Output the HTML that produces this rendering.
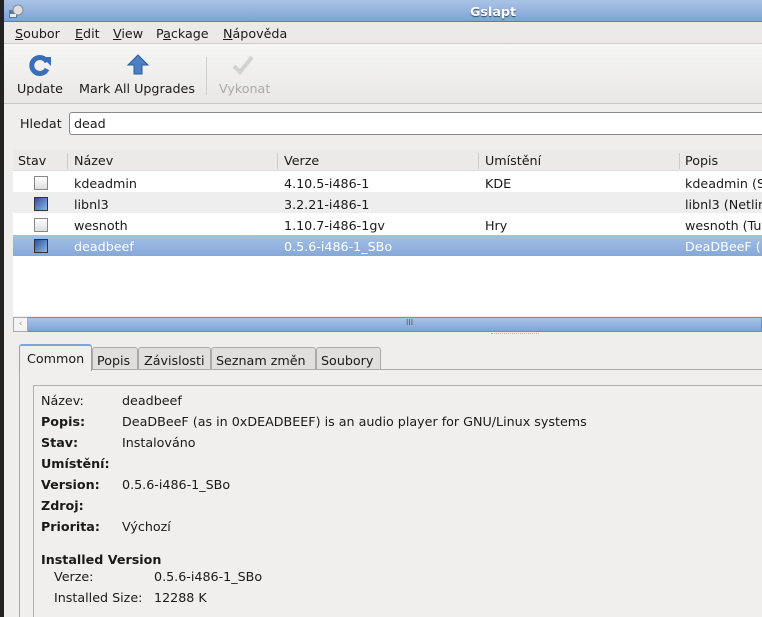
<!DOCTYPE html>
<html><head><meta charset="utf-8"><style>
*{margin:0;padding:0;box-sizing:border-box}
html,body{width:762px;height:617px;overflow:hidden}
body{background:#efeeed;font-family:"DejaVu Sans",sans-serif;font-size:12.7px;line-height:19px;color:#1a1a1a;position:relative}
.a{position:absolute;white-space:nowrap}
u{text-decoration:underline}
</style></head><body>
<div class="a" style="left:0;top:0;width:4px;height:617px;background:#222"></div>
<div class="a" style="left:4px;top:0;width:758px;height:22px;background:linear-gradient(#a9c3e6,#7ea3d6);border-bottom:1px solid #5a7fb5"></div>
<div class="a" style="left:8px;top:3px;width:16px;height:16px;"><svg width="16" height="16"><rect x="1" y="7" width="8" height="8" fill="#5577aa"/><circle cx="10" cy="7" r="5" fill="#ddd" stroke="#888"/><rect x="2" y="11" width="6" height="3" fill="#eee"/></svg></div>
<div class="a" style="left:470px;top:2px;color:#fff;font-weight:bold;text-shadow:0 1px 1px #345">Gslapt</div>
<div class="a" style="left:4px;top:22px;width:758px;height:22px;background:#ebeae9;border-bottom:1px solid #ccc"></div>
<div class="a" style="left:15px;top:24px"><u>S</u>oubor</div>
<div class="a" style="left:75px;top:24px"><u>E</u>dit</div>
<div class="a" style="left:113px;top:24px"><u>V</u>iew</div>
<div class="a" style="left:156px;top:24px">P<u>a</u>ckage</div>
<div class="a" style="left:223px;top:24px"><u>N</u>ápověda</div>
<div class="a" style="left:4px;top:44px;width:758px;height:60px;background:linear-gradient(#f6f6f5,#e8e7e6);border-bottom:1px solid #c8c8c8"></div>
<svg class="a" style="left:28px;top:53px" width="24" height="24"><path d="M19 9A8 8 0 1 0 19 16" fill="none" stroke="#3a6fb8" stroke-width="5"/><path d="M14 4L23 4L23 13Z" fill="#3a6fb8"/></svg>
<svg class="a" style="left:126px;top:53px" width="24" height="24"><path d="M12 2L22 12L16 12L16 21L8 21L8 12L2 12Z" fill="#4a80c4" stroke="#2d5c9a"/></svg>
<svg class="a" style="left:231px;top:54px" width="24" height="22"><path d="M3 12L9 18L21 3" fill="none" stroke="#d2d2d2" stroke-width="4"/></svg>
<div class="a" style="left:17px;top:79px">Update</div>
<div class="a" style="left:79px;top:79px">Mark All Upgrades</div>
<div class="a" style="left:206px;top:57px;width:1px;height:38px;background:#cfcfcf"></div>
<div class="a" style="left:219px;top:79px;color:#aaa">Vykonat</div>
<div class="a" style="left:20px;top:114px">Hledat</div>
<div class="a" style="left:69px;top:112px;width:700px;height:23px;background:#fff;border:1px solid #888;border-radius:3px"></div>
<div class="a" style="left:74px;top:114px">dead</div>
<div class="a" style="left:13px;top:149px;width:749px;height:167px;background:#fff"></div>
<div class="a" style="left:13px;top:149px;width:749px;height:22px;background:#eceae9;border-bottom:1px solid #ddd"></div>
<div class="a" style="left:18px;top:151px">Stav</div>
<div class="a" style="left:67px;top:153px;width:1px;height:16px;background:#ccc"></div>
<div class="a" style="left:74px;top:151px">Název</div>
<div class="a" style="left:277px;top:153px;width:1px;height:16px;background:#ccc"></div>
<div class="a" style="left:284px;top:151px">Verze</div>
<div class="a" style="left:478px;top:153px;width:1px;height:16px;background:#ccc"></div>
<div class="a" style="left:485px;top:151px">Umístění</div>
<div class="a" style="left:679px;top:153px;width:1px;height:16px;background:#ccc"></div>
<div class="a" style="left:685px;top:151px">Popis</div>
<div class="a" style="left:13px;top:192px;width:749px;height:21px;background:#eeeeee"></div>
<div class="a" style="left:13px;top:235px;width:749px;height:21px;background:linear-gradient(#a3c0e6,#86a8d8)"></div>
<div class="a" style="left:34px;top:176px;width:14px;height:14px;border:1px solid #888;background:linear-gradient(#fff,#ddd)"></div>
<div class="a" style="left:34px;top:197px;width:14px;height:14px;border:1px solid #333;background:linear-gradient(135deg,#3050a0,#8ab8e8)"></div>
<div class="a" style="left:34px;top:218px;width:14px;height:14px;border:1px solid #888;background:linear-gradient(#fff,#ddd)"></div>
<div class="a" style="left:34px;top:239px;width:14px;height:14px;border:1px solid #333;background:linear-gradient(135deg,#3050a0,#8ab8e8)"></div>
<div class="a" style="left:74px;top:174px">kdeadmin</div><div class="a" style="left:284px;top:174px">4.10.5-i486-1</div><div class="a" style="left:485px;top:174px">KDE</div><div class="a" style="left:685px;top:174px">kdeadmin (S</div>
<div class="a" style="left:74px;top:195px">libnl3</div><div class="a" style="left:284px;top:195px">3.2.21-i486-1</div><div class="a" style="left:685px;top:195px">libnl3 (Netlin</div>
<div class="a" style="left:74px;top:216px">wesnoth</div><div class="a" style="left:284px;top:216px">1.10.7-i486-1gv</div><div class="a" style="left:485px;top:216px">Hry</div><div class="a" style="left:685px;top:216px">wesnoth (Tur</div>
<div class="a" style="left:74px;top:237px;color:#fff">deadbeef</div><div class="a" style="left:284px;top:237px;color:#fff">0.5.6-i486-1_SBo</div><div class="a" style="left:685px;top:237px;color:#fff">DeaDBeeF (</div>
<div class="a" style="left:13px;top:317px;width:749px;height:15px;background:linear-gradient(#a8c4e8,#7fa3d6);border:1px solid #6a8cc0"></div>
<div class="a" style="left:13px;top:317px;width:15px;height:15px;background:#f4f4f4;border:1px solid #aaa;font-size:9px;color:#999;text-align:center;line-height:13px">‹</div>
<div class="a" style="left:406px;top:318px;font-size:8px;line-height:10px;color:#556">III</div>
<div class="a" style="left:491px;top:333px;width:48px;height:2px;border-top:1px dotted #bbb"></div>
<div class="a" style="left:19px;top:369px;width:760px;height:248px;border:1px solid #a8a8a8;border-bottom:none;background:#f0efee"></div>
<div class="a" style="left:19px;top:344px;width:73px;height:27px;background:#f0efee;border:1px solid #a0a0a0;border-bottom:none;border-top:2px solid #7ea3d6;border-radius:3px 3px 0 0"></div>
<div class="a" style="left:27px;top:349px">Common</div>
<div class="a" style="left:92px;top:347px;width:46px;height:23px;background:#e0dfde;border:1px solid #aaa;border-radius:3px 3px 0 0"></div><div class="a" style="left:97px;top:351px">Popis</div>
<div class="a" style="left:138px;top:347px;width:73px;height:23px;background:#e0dfde;border:1px solid #aaa;border-radius:3px 3px 0 0"></div><div class="a" style="left:144px;top:351px">Závislosti</div>
<div class="a" style="left:211px;top:347px;width:105px;height:23px;background:#e0dfde;border:1px solid #aaa;border-radius:3px 3px 0 0"></div><div class="a" style="left:216px;top:351px">Seznam změn</div>
<div class="a" style="left:316px;top:347px;width:65px;height:23px;background:#e0dfde;border:1px solid #aaa;border-radius:3px 3px 0 0"></div><div class="a" style="left:321px;top:351px">Soubory</div>
<div class="a" style="left:33px;top:385px;width:740px;height:240px;border:1px solid #b0b0b0"></div>
<div class="a" style="left:41px;top:391px">Název:</div><div class="a" style="left:122px;top:391px">deadbeef</div>
<div class="a" style="left:41px;top:412px;font-weight:bold">Popis:</div><div class="a" style="left:122px;top:412px">DeaDBeeF (as in 0xDEADBEEF) is an audio player for GNU/Linux systems</div>
<div class="a" style="left:41px;top:433px;font-weight:bold">Stav:</div><div class="a" style="left:122px;top:433px">Instalováno</div>
<div class="a" style="left:41px;top:454px;font-weight:bold">Umístění:</div>
<div class="a" style="left:41px;top:475px;font-weight:bold">Version:</div><div class="a" style="left:122px;top:475px">0.5.6-i486-1_SBo</div>
<div class="a" style="left:41px;top:496px;font-weight:bold">Zdroj:</div>
<div class="a" style="left:41px;top:517px;font-weight:bold">Priorita:</div><div class="a" style="left:122px;top:517px">Výchozí</div>
<div class="a" style="left:41px;top:550px;font-weight:bold">Installed Version</div>
<div class="a" style="left:54px;top:567px">Verze:</div><div class="a" style="left:154px;top:567px">0.5.6-i486-1_SBo</div>
<div class="a" style="left:54px;top:588px">Installed Size:</div><div class="a" style="left:154px;top:588px">12288 K</div>
</body></html>
